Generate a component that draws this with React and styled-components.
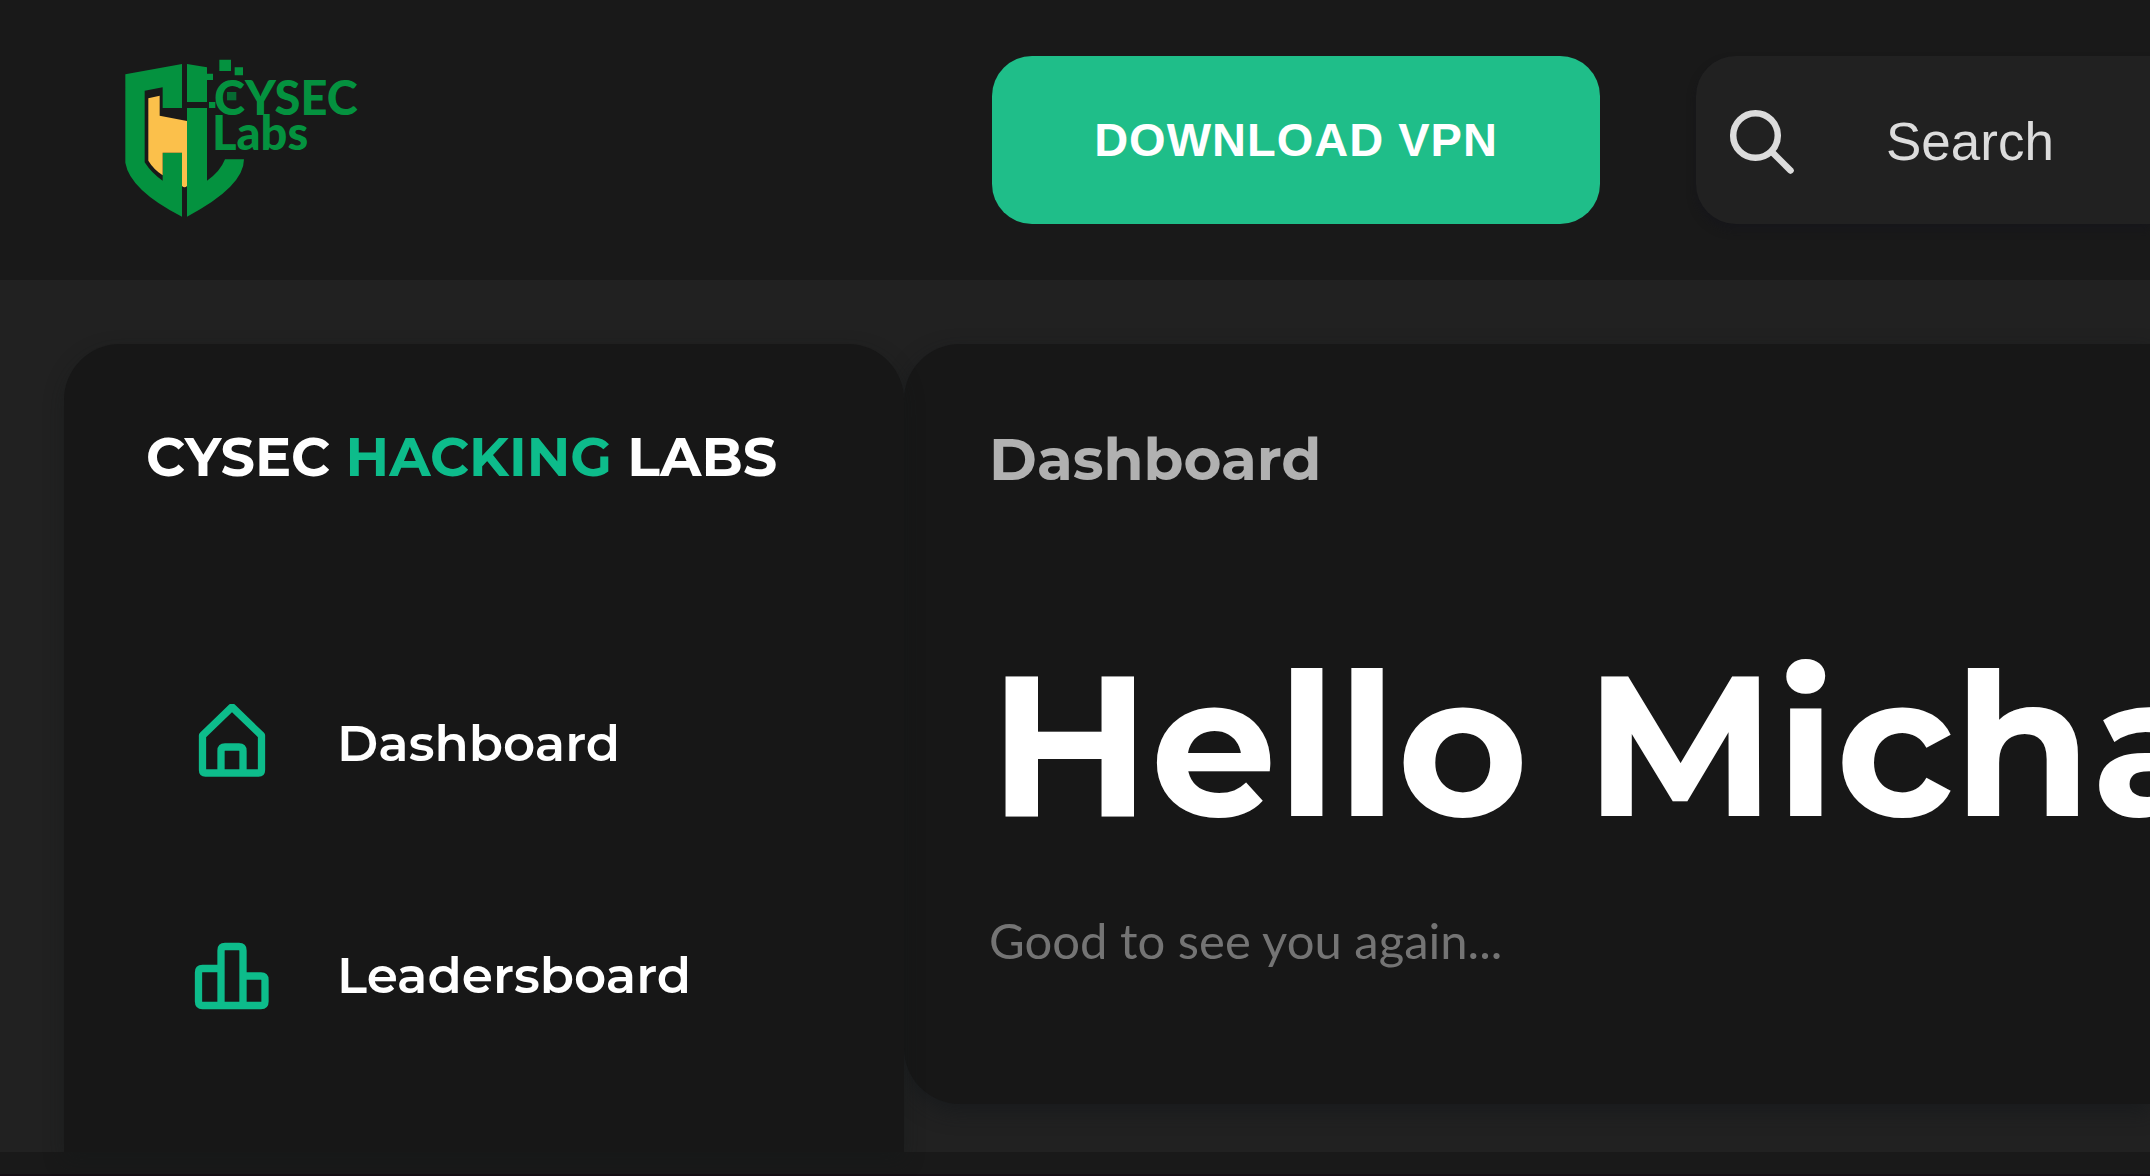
import React from "react";
import styled, { createGlobalStyle } from "styled-components";

const display = `Montserrat, Inter, "Open Sans", sans-serif`;

const GlobalStyle = createGlobalStyle`
  *, *::before, *::after { box-sizing: border-box; }
  html, body, #root { height: 100%; }
  body {
    margin: 0;
    background: #191919;
    overflow: hidden;
    font-family: ${display};
    color: #fff;
  }
`;

const Page = styled.div`
  display: flex;
  flex-direction: column;
  height: 100%;
  min-height: 0;
  border-bottom: 2px solid #150f14;
`;

const Header = styled.header`
  display: flex;
  align-items: center;
  gap: 96px;
  padding: 56px 0 56px 120px;
  background: #191919;
`;

const LogoLink = styled.a`
  display: block;
  margin-right: auto;
  flex: none;
  line-height: 0;
`;

const VpnButton = styled.button`
  flex: none;
  width: 608px;
  height: 168px;
  border: 0;
  border-radius: 40px;
  background: #1fbe89;
  color: #fff;
  font: 700 47px/56px "Liberation Sans", Arial, sans-serif;
  letter-spacing: 1px;
`;

const SearchBox = styled.label`
  display: flex;
  align-items: center;
  gap: 86px;
  flex: none;
  width: 454px;
  height: 168px;
  padding-left: 32px;
  border-radius: 40px 0 0 40px;
  background: #212121;
  color: #dcdcdc;
  box-shadow: 0 6px 8px rgba(20, 20, 28, 0.5);
`;

const SearchInput = styled.input`
  flex: 1;
  min-width: 0;
  padding: 4px 0 0;
  border: 0;
  outline: 0;
  background: transparent;
  color: inherit;
  font: 400 53px/64px "Liberation Sans", Arial, sans-serif;
  &::placeholder { color: inherit; opacity: 1; }
`;

const Body = styled.div`
  display: flex;
  align-items: stretch;
  flex: 1;
  min-height: 0;
  padding: 64px 0 0 64px;
  background: #212121;
`;

const Sidebar = styled.aside`
  position: relative;
  z-index: 1;
  flex: none;
  width: 840px;
  padding: 80px 82px;
  border-radius: 56px 56px 0 0;
  background: #171717;
  box-shadow: 0 8px 20px rgba(20, 24, 26, 0.4);
`;

const Brand = styled.h2`
  margin: 0 0 206px;
  font-size: 54px;
  line-height: 66px;
  font-weight: 700;
  white-space: nowrap;
`;

const Accent = styled.span`
  color: #0dbc8b;
`;

const NavList = styled.ul`
  display: flex;
  flex-direction: column;
  gap: 136px;
  margin: 0;
  padding: 0 46px;
  list-style: none;
`;

const NavLink = styled.a`
  display: flex;
  align-items: center;
  gap: 65px;
  height: 96px;
  color: #fff;
  text-decoration: none;
  font-size: 50px;
  line-height: 64px;
  font-weight: 600;
`;

const NavIcon = styled.svg`
  width: 80px;
  height: 80px;
  flex: none;
  fill: none;
  stroke: #0dbc8b;
  stroke-width: 7.3;
  stroke-linejoin: round;
  stroke-linecap: butt;
`;

const Main = styled.main`
  flex: 1;
  min-width: 0;
  align-self: flex-start;
  overflow: hidden;
  padding: 80px 0 132px 85px;
  border-radius: 56px 0 0 56px;
  background: #171717;
  box-shadow: 0 8px 20px rgba(20, 24, 26, 0.6);
`;

const PageTitle = styled.h3`
  margin: 0 0 144px;
  color: #b1b1b1;
  font-size: 58px;
  line-height: 72px;
  font-weight: 700;
`;

const Greeting = styled.h1`
  margin: 0 0 60px;
  font-size: 200px;
  line-height: 208px;
  font-weight: 700;
  white-space: nowrap;
`;

const Welcome = styled.p`
  margin: 0;
  color: #747474;
  font: 400 49px/64px Lato, sans-serif;
`;

const Footer = styled.footer`
  flex: none;
  height: 22px;
  background: #191919;
`;

const Logo = () => (
  <svg width="248" height="168" viewBox="30 18 744 504" role="img" aria-label="CYSEC Labs">
    <g fill="#04923f">
      <path d="M46 73 216 42V174H158V112L104 122V337Q125 370 158 392V308H216V500Q60 420 46 338Z" />
      <path d="M231 42 291 52V156H231ZM231 174H291V392Q330 366 345 328H402Q402 410 231 500Z" />
      <path d="M291 71h18v19h-18ZM328 29h35v34h-35ZM374 52h25v24h-25ZM297 156h19v18h-19Z" />
    </g>
    <path fill="#fbc04b" d="M115 145 149 137V197L231 213V408Q224 416 216 408V308H158V376Q130 357 115 332Z" />
    <g fill="#04923f" fontFamily="Lato, sans-serif" fontWeight="900">
      <text x="312" y="194" fontSize="141">CYSEC</text>
      <text x="306" y="299" fontSize="141">Labs</text>
    </g>
    <path fill="#066b32" d="M351 126h28v25h-28Z" />
  </svg>
);

const HomeIcon = () => (
  <NavIcon viewBox="192 704 80 80" aria-hidden="true">
    <path d="M202.500 735.500 232 707 261.500 735.500V770q0 3-3 3h-53q-3 0-3-3Z" />
    <path d="M221 773v-22q0-4 4-4h14q4 0 4 4v22" />
  </NavIcon>
);

const LeaderboardIcon = () => (
  <NavIcon viewBox="192 936 80 80" aria-hidden="true">
    <path d="M221 968.500h-18.500q-4 0-4 4v29q0 4 4 4h58.500q4 0 4-4V980q0-4-4-4H243" />
    <path d="M221 1005.500v-55q0-4 4-4h14q4 0 4 4v55" />
  </NavIcon>
);

const SearchIcon = () => (
  <svg width="72" height="72" viewBox="1728 104 72 72" fill="none" stroke="currentColor" strokeWidth="6.500" strokeLinecap="round" aria-hidden="true">
    <circle cx="1755.500" cy="135.500" r="22.300" />
    <path d="m1773 153 17.500 17.500" />
  </svg>
);

const items = [
  { label: "Dashboard", Icon: HomeIcon },
  { label: "Leadersboard", Icon: LeaderboardIcon },
];

export default function App() {
  return (
    <Page>
      <GlobalStyle />
      <Header>
        <LogoLink href="#home"><Logo /></LogoLink>
        <VpnButton type="button">DOWNLOAD VPN</VpnButton>
        <SearchBox>
          <SearchIcon />
          <SearchInput type="search" placeholder="Search" aria-label="Search" />
        </SearchBox>
      </Header>
      <Body>
        <Sidebar>
          <Brand>CYSEC <Accent>HACKING</Accent> LABS</Brand>
          <nav>
            <NavList>
              {items.map(({ label, Icon }) => (
                <li key={label}>
                  <NavLink href={"#" + label.toLowerCase()}><Icon />{label}</NavLink>
                </li>
              ))}
            </NavList>
          </nav>
        </Sidebar>
        <Main>
          <PageTitle>Dashboard</PageTitle>
          <Greeting>Hello Michael</Greeting>
          <Welcome>Good to see you again...</Welcome>
        </Main>
      </Body>
      <Footer />
    </Page>
  );
}
